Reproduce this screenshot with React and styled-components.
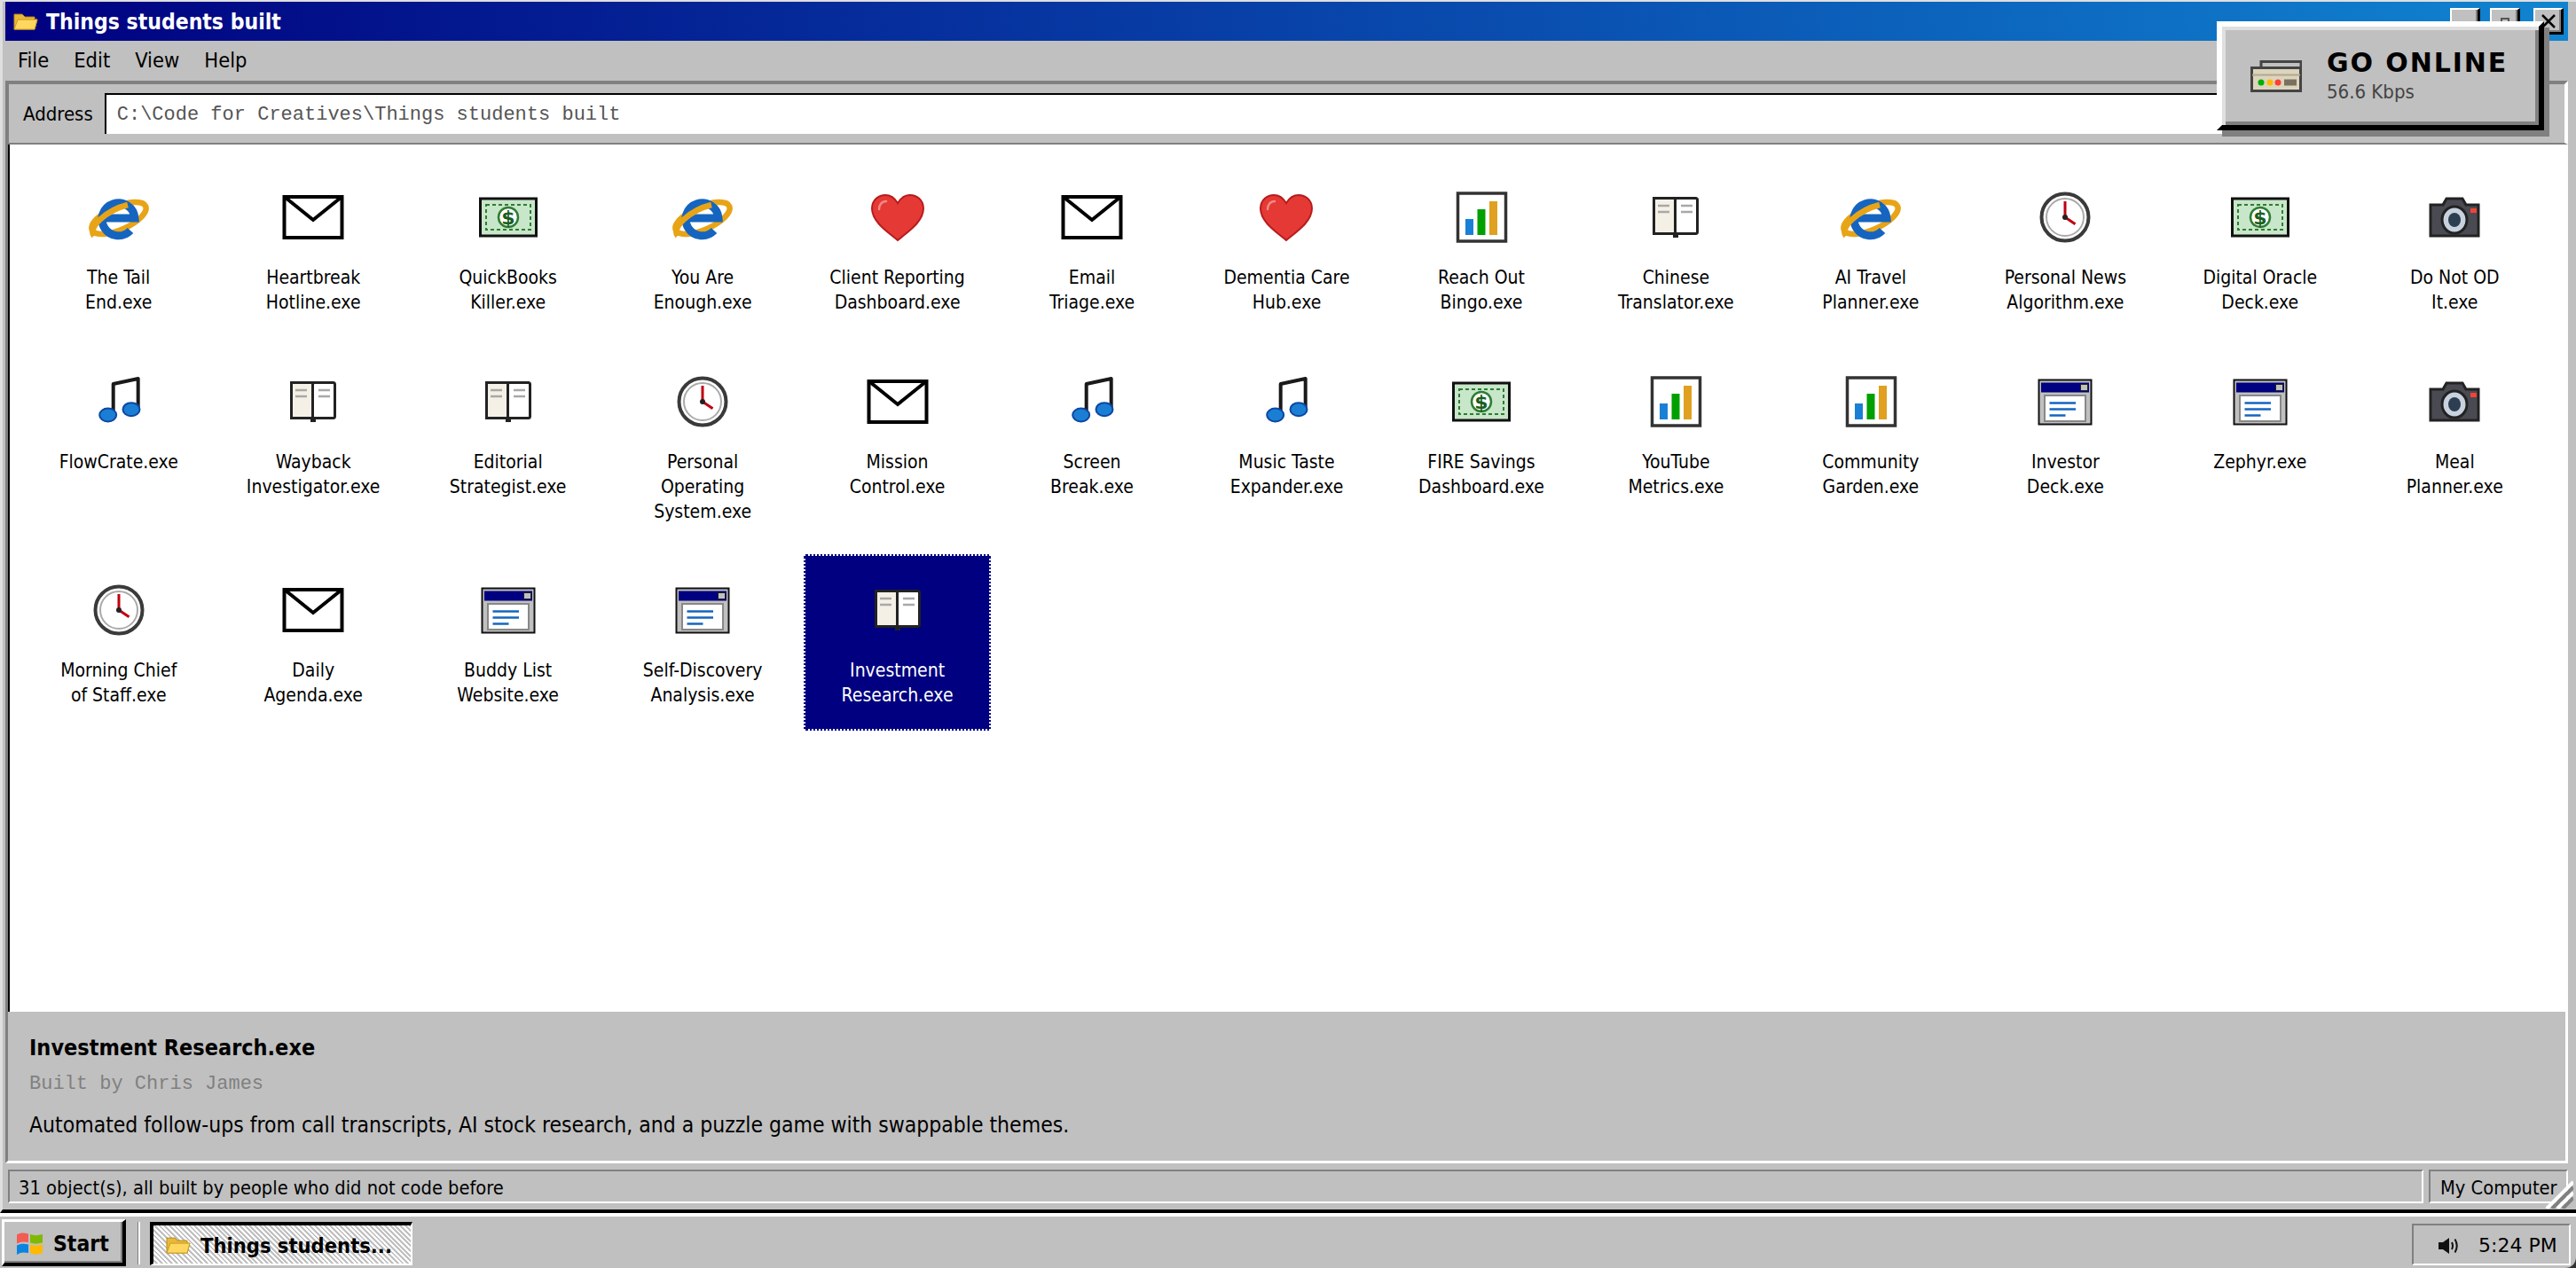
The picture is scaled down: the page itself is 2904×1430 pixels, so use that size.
import React from "react";
import styled, { createGlobalStyle } from "styled-components";

const GlobalStyle = createGlobalStyle`
  html, body { margin: 0; padding: 0; height: 100%; overflow: hidden; }
  #root { height: 100%; }
  * { box-sizing: border-box; }
`;

const ui = `"DejaVu Sans Condensed", "DejaVu Sans", sans-serif`;
const mono = `"Liberation Mono", monospace`;

const programs = [
  ["The Tail|End.exe", "ie"],
  ["Heartbreak|Hotline.exe", "mail"],
  ["QuickBooks|Killer.exe", "bill"],
  ["You Are|Enough.exe", "ie"],
  ["Client Reporting|Dashboard.exe", "heart"],
  ["Email|Triage.exe", "mail"],
  ["Dementia Care|Hub.exe", "heart"],
  ["Reach Out|Bingo.exe", "chart"],
  ["Chinese|Translator.exe", "book"],
  ["AI Travel|Planner.exe", "ie"],
  ["Personal News|Algorithm.exe", "clock"],
  ["Digital Oracle|Deck.exe", "bill"],
  ["Do Not OD|It.exe", "camera"],
  ["FlowCrate.exe", "note"],
  ["Wayback|Investigator.exe", "book"],
  ["Editorial|Strategist.exe", "book"],
  ["Personal|Operating|System.exe", "clock"],
  ["Mission|Control.exe", "mail"],
  ["Screen|Break.exe", "note"],
  ["Music Taste|Expander.exe", "note"],
  ["FIRE Savings|Dashboard.exe", "bill"],
  ["YouTube|Metrics.exe", "chart"],
  ["Community|Garden.exe", "chart"],
  ["Investor|Deck.exe", "window"],
  ["Zephyr.exe", "window"],
  ["Meal|Planner.exe", "camera"],
  ["Morning Chief|of Staff.exe", "clock"],
  ["Daily|Agenda.exe", "mail"],
  ["Buddy List|Website.exe", "window"],
  ["Self-Discovery|Analysis.exe", "window"],
  ["Investment|Research.exe", "book"],
];

const drawings = {
  ie: (
    <>
      <ellipse cx="0" cy="1" rx="33" ry="13" transform="rotate(-24 0 1)" fill="none" stroke="#e8a417" strokeWidth="6.5" />
      <path d="M-17 1H18A18.500 18.500 0 1 0 13 15" fill="none" stroke="#1565c0" strokeWidth="9" />
      <path d="M-28 21C-36 12 -14 -8 10 -14" fill="none" stroke="#e8a417" strokeWidth="6.500" />
    </>
  ),
  mail: (
    <>
      <rect x="-32.500" y="-23" width="65" height="46" fill="#fff" stroke="#000" strokeWidth="4" />
      <path d="M-31 -22L0 3L31 -22" fill="none" stroke="#000" strokeWidth="4" />
    </>
  ),
  bill: (
    <>
      <rect x="-31.500" y="-21" width="63" height="42" fill="#c8e6c9" stroke="#111" strokeWidth="3" />
      <rect x="-25" y="-14" width="50" height="28" fill="none" stroke="#2e7d32" strokeWidth="2" strokeDasharray="4 3" />
      <circle r="11" fill="#fff" stroke="#2e7d32" strokeWidth="2.500" />
      <text y="8" textAnchor="middle" fontSize="22" fontWeight="700" fill="#1b5e20" fontFamily="DejaVu Sans">$</text>
    </>
  ),
  heart: (
    <>
      <path d="M0 26C-12 16 -29 5 -29 -10C-29 -20 -21 -25 -14 -25C-7 -25 -3 -21 0 -16C3 -21 7 -25 14 -25C21 -25 29 -20 29 -10C29 5 12 16 0 26Z" fill="#e53935" stroke="#b71c1c" strokeWidth="2" />
      <path d="M-21 -9C-21 -14 -18 -18 -13 -18" fill="none" stroke="#ef8a85" strokeWidth="2.500" strokeLinecap="round" />
    </>
  ),
  chart: (
    <>
      <rect x="-26.500" y="-27" width="54" height="54" fill="#fff" stroke="#333" strokeWidth="3.500" />
      <rect x="-18" y="2" width="9" height="18" fill="#1a80d6" />
      <rect x="-4.500" y="-9" width="9" height="29" fill="#00a000" />
      <rect x="9" y="-18" width="9" height="38" fill="#e0a020" />
    </>
  ),
  book: (
    <>
      <rect x="-3" y="17" width="6" height="6" fill="#222" />
      <rect x="-24.500" y="-21.500" width="24" height="40" fill="#f5f0e6" stroke="#222" strokeWidth="3" />
      <rect x="-0.500" y="-21.500" width="25" height="40" rx="2" fill="#fff" stroke="#222" strokeWidth="3" />
      <path d="M-20 -13H-7M-20 -6H-7M6 -13H19M6 -6H19" stroke="#a8a8a8" strokeWidth="2.500" />
    </>
  ),
  clock: (
    <>
      <circle r="26.500" fill="#fff" stroke="#3a3a3a" strokeWidth="4" />
      <circle r="21" fill="#fff" stroke="#aaa" strokeWidth="2" />
      <path d="M0 0V-18M0 0L11.500 7.700" stroke="#c00010" strokeWidth="3" />
      <circle r="3" fill="#222" />
    </>
  ),
  camera: (
    <>
      <path d="M-27 -14H-13L-9 -21H9L13 -14H27V21H-27Z" fill="#4a4a52" stroke="#222" strokeWidth="3" />
      <ellipse cx="0" cy="3" rx="14" ry="15" fill="#c8d2de" stroke="#222" strokeWidth="3" />
      <ellipse cx="0" cy="3" rx="7" ry="8" fill="#2d3e50" />
      <rect x="18" y="-10" width="7" height="5" fill="#f44336" />
    </>
  ),
  note: (
    <>
      <path d="M-6.300 13V-20L21.700 -26V8" fill="none" stroke="#1a1a1a" strokeWidth="4" strokeLinejoin="round" />
      <ellipse cx="-12.300" cy="15" rx="9.500" ry="7.500" fill="#1a7fd4" stroke="#0d47a1" strokeWidth="2" />
      <ellipse cx="14" cy="8.700" rx="9.500" ry="7.500" fill="#1a7fd4" stroke="#0d47a1" strokeWidth="2" />
    </>
  ),
  window: (
    <>
      <rect x="-29.500" y="-24.500" width="59" height="50" fill="#c0c0c0" stroke="#111" strokeWidth="2" />
      <rect x="-27" y="-21.500" width="54" height="11" fill="#000080" />
      <rect x="17.500" y="-19.500" width="8" height="7" fill="#c0c0c0" stroke="#222" strokeWidth="1" />
      <rect x="-23" y="-7" width="46" height="29" fill="#fff" stroke="#888" strokeWidth="2" />
      <path d="M-17.500 1.500H12M-17.500 8.500H12M-17.500 15.500H0.500" stroke="#1565c0" strokeWidth="2.500" />
    </>
  ),
};

const Icon = ({ kind }) => (
  <IconSvg viewBox="-36 -36 72 72">{drawings[kind]}</IconSvg>
);

const FolderIcon = ({ size = 28 }) => (
  <svg width={size} height={size * 0.72} viewBox="0 0 28 20">
    <path d="M1 19V2H10L13 5H24V8H27L24 19Z" fill="#e8b838" stroke="#b58a1e" strokeWidth="1" />
    <path d="M1 19L5 8H27L24 19Z" fill="#ffd75e" stroke="#c89a28" strokeWidth="1" />
  </svg>
);

const Flag = () => (
  <svg width="29" height="25" viewBox="0 0 29 25">
    <path d="M0 2.500C4 0 8 0 13 1.500V11C8 10 4 10 0 12.500Z" fill="#f25c54" />
    <path d="M15 2C19 3.500 24 3.500 29 2V11.500C24 13 19 13 15 11.500Z" fill="#7fba00" />
    <path d="M0 14.500C4 12.500 8 12.500 13 13.500V23C8 22 4 22 0 25Z" fill="#0a84e0" />
    <path d="M15 13.500C19 15 24 15 29 13.500V23C24 25 19 25 15 23Z" fill="#ffb900" />
  </svg>
);

const Modem = () => (
  <svg width="58" height="36" viewBox="0 0 58 36">
    <rect x="12" y="1.500" width="45" height="9" fill="#c0c0c0" stroke="#444" strokeWidth="3" />
    <rect x="1.500" y="8.500" width="55" height="26" fill="#dcd4bc" stroke="#444" strokeWidth="3" />
    <path d="M2 16.500H56" stroke="#b0a890" strokeWidth="2" />
    <circle cx="12" cy="25" r="3.500" fill="#00b000" />
    <circle cx="22" cy="25" r="3.500" fill="#ffbb00" />
    <circle cx="31" cy="25" r="3.500" fill="#ff4030" />
    <rect x="38" y="21.500" width="14" height="7" fill="#7a7060" />
  </svg>
);

const Speaker = () => (
  <svg width="24" height="20" viewBox="0 0 24 20">
    <path d="M1 6H6L13 1V19L6 14H1Z" fill="#111" />
    <path d="M16 6Q18 10 16 14M19.500 2.500Q24 10 19.500 17.500" fill="none" stroke="#111" strokeWidth="2" />
  </svg>
);

const Page = styled.div`
  height: 100vh;
  display: flex;
  flex-direction: column;
  background: #333;
  font-family: ${ui};
  color: #000;
`;

const Window = styled.div`
  flex: 1;
  min-height: 0;
  position: relative;
  display: flex;
  flex-direction: column;
  background: #c0c0c0;
  border-top: 2px solid #dfdfdf;
  border-left: 3px solid #dfdfdf;
  border-bottom: 4px solid #000;
  padding: 0 9px 7px 3px;
`;

const TitleBar = styled.div`
  height: 44px;
  flex: none;
  display: flex;
  align-items: center;
  padding: 0 5px 0 9px;
  gap: 9px;
  background: linear-gradient(90deg, #000080, #1084d0);
  color: #fff;
  font-size: 24.500px;
  font-weight: 700;
`;

const TitleText = styled.span`
  flex: 1;
`;

const CtrlGroup = styled.div`
  display: flex;
  gap: 11px;
  & > :last-child {
    margin-left: 4px;
  }
`;

const CtrlButton = styled.div`
  width: 34px;
  height: 30px;
  display: flex;
  align-items: center;
  justify-content: center;
  background: #c0c0c0;
  border-style: solid;
  border-width: 2px 3px 3px 2px;
  border-color: #fff #000 #000 #fff;
  box-shadow: inset -2px -2px 0 #808080;
`;

const MenuBar = styled.div`
  height: 45px;
  flex: none;
  display: flex;
  align-items: center;
  padding: 0 14px 1px;
  gap: 28px;
  font-size: 23.500px;
`;

const AddressBar = styled.div`
  height: 72px;
  flex: none;
  display: flex;
  align-items: center;
  gap: 13px;
  padding: 6px 21px 6px 16px;
  border-style: solid;
  border-width: 4px 4px 2px 4px;
  border-color: #808080 #fff #808080 #808080;
`;

const AddressLabel = styled.span`
  font-size: 22px;
`;

const AddressInput = styled.div`
  flex: 1;
  height: 46px;
  display: flex;
  align-items: center;
  padding-left: 12px;
  background: #fff;
  border-top: 2px solid #000;
  border-left: 2px solid #000;
  font-family: ${mono};
  font-size: 22px;
  color: #555;
`;

const GoButton = styled.div`
  width: 100px;
  height: 44px;
  background: #c0c0c0;
  border-style: solid;
  border-width: 2px 5px 2px 2px;
  border-color: #fff #808080 #000 #fff;
`;

const Main = styled.div`
  flex: 1;
  min-height: 0;
  display: flex;
  flex-direction: column;
  border-style: solid;
  border-width: 0 3px 3px 3px;
  border-color: #808080 #fff #fff #808080;
`;

const IconGrid = styled.div`
  flex: 1;
  min-height: 0;
  display: grid;
  grid-template-columns: repeat(13, 1fr);
  align-content: start;
  align-items: start;
  gap: 8.5px 8px;
  padding: 19px 19px 19px 17px;
  background: #fff;
  border-left: 2px solid #000;
`;

const Item = styled.div`
  min-height: 199px;
  display: flex;
  flex-direction: column;
  align-items: center;
  padding: 27px 4px 26px;
  text-align: center;
  font-size: 21px;
  line-height: 28px;
  color: ${(p) => (p.$selected ? "#fff" : "#000")};
  background: ${(p) => (p.$selected ? "#000080" : "transparent")};
  outline: ${(p) => (p.$selected ? "2px dotted #fff" : "none")};
  outline-offset: -2px;
`;

const IconSvg = styled.svg`
  width: 72px;
  height: 72px;
  margin-bottom: 18px;
  flex: none;
`;

const LabelLine = styled.span`
  display: block;
  white-space: nowrap;
`;

const Detail = styled.div`
  height: 168px;
  flex: none;
  padding: 25px 0 0 24px;
`;

const DetailTitle = styled.div`
  font-size: 25px;
  font-weight: 700;
  line-height: 32px;
`;

const DetailBy = styled.div`
  margin-top: 10px;
  font-family: ${mono};
  font-size: 22px;
  line-height: 30px;
  color: #808080;
`;

const DetailText = styled.div`
  margin-top: 15px;
  font-size: 24.500px;
  line-height: 32px;
`;

const StatusBar = styled.div`
  height: 38px;
  flex: none;
  display: flex;
  gap: 6px;
  margin: 7px 0 0 3px;
`;

const StatusCell = styled.div`
  flex: ${(p) => (p.$fixed ? "none" : 1)};
  width: ${(p) => (p.$fixed ? "157px" : "auto")};
  display: flex;
  align-items: center;
  padding: 2px ${(p) => (p.$fixed ? "0 0 11px" : "0 0 10px")};
  font-size: 21.700px;
  border-style: solid;
  border-width: 2px;
  border-color: #808080 #fff #fff #808080;
`;

const Grip = styled.svg`
  position: absolute;
  right: 3px;
  bottom: 1px;
  width: 32px;
  height: 32px;
`;

const Popup = styled.div`
  position: absolute;
  top: 22px;
  right: 36px;
  width: 369px;
  height: 123px;
  display: flex;
  align-items: center;
  gap: 28px;
  padding-left: 32px;
  background: #c0c0c0;
  border: 6px solid;
  border-color: #fff #000 #000 #fff;
  box-shadow: inset 4px 4px 0 #dfdfdf, inset -4px -4px 0 #808080, 6px 7px 0 #808080;
`;

const PopupTitle = styled.div`
  font-family: "DejaVu Sans", sans-serif;
  font-size: 30px;
  font-weight: 700;
  letter-spacing: 1.900px;
  line-height: 36px;
`;

const PopupSub = styled.div`
  margin-top: 1px;
  font-size: 22px;
  line-height: 28px;
  color: #444;
`;

const Taskbar = styled.div`
  height: 62px;
  flex: none;
  display: flex;
  align-items: flex-end;
  gap: 13px;
  padding: 0 6px 2px 2px;
  border-top: 4px solid #fff;
  border-bottom-right-radius: 12px;
  background: #c0c0c0;
`;

const StartButton = styled.div`
  width: 140px;
  height: 53px;
  display: flex;
  align-items: center;
  gap: 12px;
  padding: 2px 0 0 14px;
  font-size: 24.500px;
  font-weight: 700;
  background: #c0c0c0;
  border-style: solid;
  border-width: 3px 4px 4px 3px;
  border-color: #fff #000 #000 #fff;
  box-shadow: inset -2px -2px 0 #808080;
`;

const Divider = styled.div`
  width: 3px;
  height: 48px;
  margin-bottom: 2px;
  background: #fff;
  border-left: 1px solid #808080;
`;

const TaskButton = styled.div`
  width: 296px;
  height: 49px;
  margin: 0 0 1px -2px;
  display: flex;
  align-items: center;
  gap: 11px;
  padding: 2px 0 0 14px;
  font-size: 23.500px;
  font-weight: 700;
  border-style: solid;
  border-width: 4px 2px 2px 4px;
  border-color: #000 #fff #fff #000;
  background: repeating-linear-gradient(45deg, #fff 0 2px, #c0c0c0 2px 4px);
`;

const Tray = styled.div`
  margin-left: auto;
  width: 179px;
  height: 47px;
  margin-bottom: 1px;
  display: flex;
  align-items: center;
  gap: 22px;
  padding: 2px 0 0 27px;
  font-size: 22px;
  font-family: "DejaVu Sans", sans-serif;
  border-style: solid;
  border-width: 2px;
  border-color: #808080 #fff #fff #808080;
`;

const App = () => (
  <Page>
    <GlobalStyle />
    <Window>
      <TitleBar>
        <FolderIcon />
        <TitleText>Things students built</TitleText>
        <CtrlGroup>
          <CtrlButton />
          <CtrlButton>
            <svg width="10" height="8" viewBox="0 0 10 8">
              <rect x="1" y="1" width="8" height="6" fill="none" stroke="#555" strokeWidth="2" />
            </svg>
          </CtrlButton>
          <CtrlButton>
            <svg width="20" height="20" viewBox="0 0 20 20">
              <path d="M3 3L17 17M17 3L3 17" stroke="#000" strokeWidth="2.500" />
            </svg>
          </CtrlButton>
        </CtrlGroup>
      </TitleBar>
      <MenuBar>
        <span>File</span>
        <span>Edit</span>
        <span>View</span>
        <span>Help</span>
      </MenuBar>
      <AddressBar>
        <AddressLabel>Address</AddressLabel>
        <AddressInput>C:\Code for Creatives\Things students built</AddressInput>
        <GoButton />
      </AddressBar>
      <Main>
        <IconGrid>
          {programs.map(([label, kind], i) => (
            <Item key={label} $selected={i === 30}>
              <Icon kind={kind} />
              {label.split("|").map((line) => (
                <LabelLine key={line}>{line}</LabelLine>
              ))}
            </Item>
          ))}
        </IconGrid>
        <Detail>
          <DetailTitle>Investment Research.exe</DetailTitle>
          <DetailBy>Built by Chris James</DetailBy>
          <DetailText>
            Automated follow-ups from call transcripts, AI stock research, and a puzzle game with swappable themes.
          </DetailText>
        </Detail>
      </Main>
      <StatusBar>
        <StatusCell>31 object(s), all built by people who did not code before</StatusCell>
        <StatusCell $fixed>My Computer</StatusCell>
      </StatusBar>
      <Grip viewBox="0 0 32 32">
        <path d="M2 32L32 2M14 32L32 14" stroke="#fff" strokeWidth="4" />
        <path d="M8 32L32 8M20 32L32 20" stroke="#808080" strokeWidth="4" />
      </Grip>
      <Popup>
        <Modem />
        <div>
          <PopupTitle>GO ONLINE</PopupTitle>
          <PopupSub>56.6 Kbps</PopupSub>
        </div>
      </Popup>
    </Window>
    <Taskbar>
      <StartButton>
        <Flag />
        Start
      </StartButton>
      <Divider />
      <TaskButton>
        <FolderIcon />
        Things students...
      </TaskButton>
      <Tray>
        <Speaker />
        5:24 PM
      </Tray>
    </Taskbar>
  </Page>
);

export default App;
